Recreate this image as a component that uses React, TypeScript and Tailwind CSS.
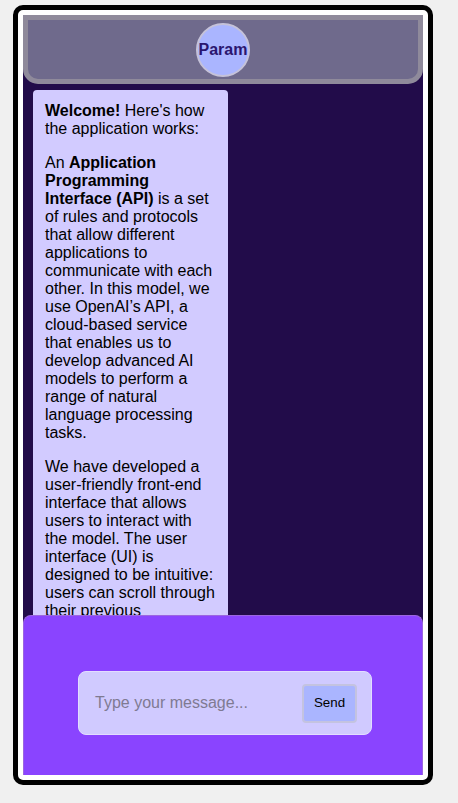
import React from "react";

export default function App() {
  return (
    <div className="min-h-screen bg-[#f0f0f0] pt-[5px] pl-[13px]" style={{ fontFamily: '"Liberation Sans", Arial, sans-serif' }}>
      <div className="w-[420px] h-[780px] border-[5px] border-black rounded-[10px] bg-white p-[5px] flex flex-col">
        <div className="flex-1 flex flex-col bg-[#220c4a] overflow-hidden">
          <div className="h-[69px] shrink-0 border-[5px] border-[#8f8a9b] bg-[#6f6a8c] rounded-b-[15px] flex items-center justify-center">
            <div className="w-[54px] h-[54px] rounded-full bg-[#aab5ff] border-2 border-[#c5c2d9] flex items-center justify-center">
              <span className="font-bold text-[16px] text-[#2a1670]">Param</span>
            </div>
          </div>
          <div className="flex-1 overflow-hidden pt-[6px] pl-[10px]">
            <div className="w-[195px] bg-[#d2cbff] rounded-[4px] p-3 text-[16px] leading-[18px] text-black">
              <p className="mb-4">
                <b>Welcome!</b> Here's how the application works:
              </p>
              <p className="mb-4">
                An <b>Application Programming Interface (API)</b> is a set of rules and protocols that allow different applications to communicate with each other. In this model, we use OpenAI’s API, a cloud-based service that enables us to develop advanced AI models to perform a range of natural language processing tasks.
              </p>
              <p className="mb-4">
                We have developed a user-friendly front-end interface that allows users to interact with the model. The user interface (UI) is designed to be intuitive: users can scroll through their previous messages and responses, and type new messages in the input box at the bottom of the screen.
              </p>
            </div>
          </div>
          <div className="h-[160px] shrink-0 bg-[#8a44ff] border border-b-0 border-[#9c66e0] rounded-t-[8px] pt-[55px] pl-[54px]">
            <div className="w-[294px] h-[64px] bg-[#d0caff] border border-[#e2ddff] rounded-[8px] flex items-center pl-[16px] pr-[14px]">
              <span className="flex-1 text-[16px] text-[#7f7a92]">Type your message...</span>
              <button className="w-[55px] h-[39px] bg-[#aab5ff] border-2 border-[#c4c3e0] rounded-[4px] text-[13.33px] text-black">
                Send
              </button>
            </div>
          </div>
        </div>
      </div>
    </div>
  );
}
